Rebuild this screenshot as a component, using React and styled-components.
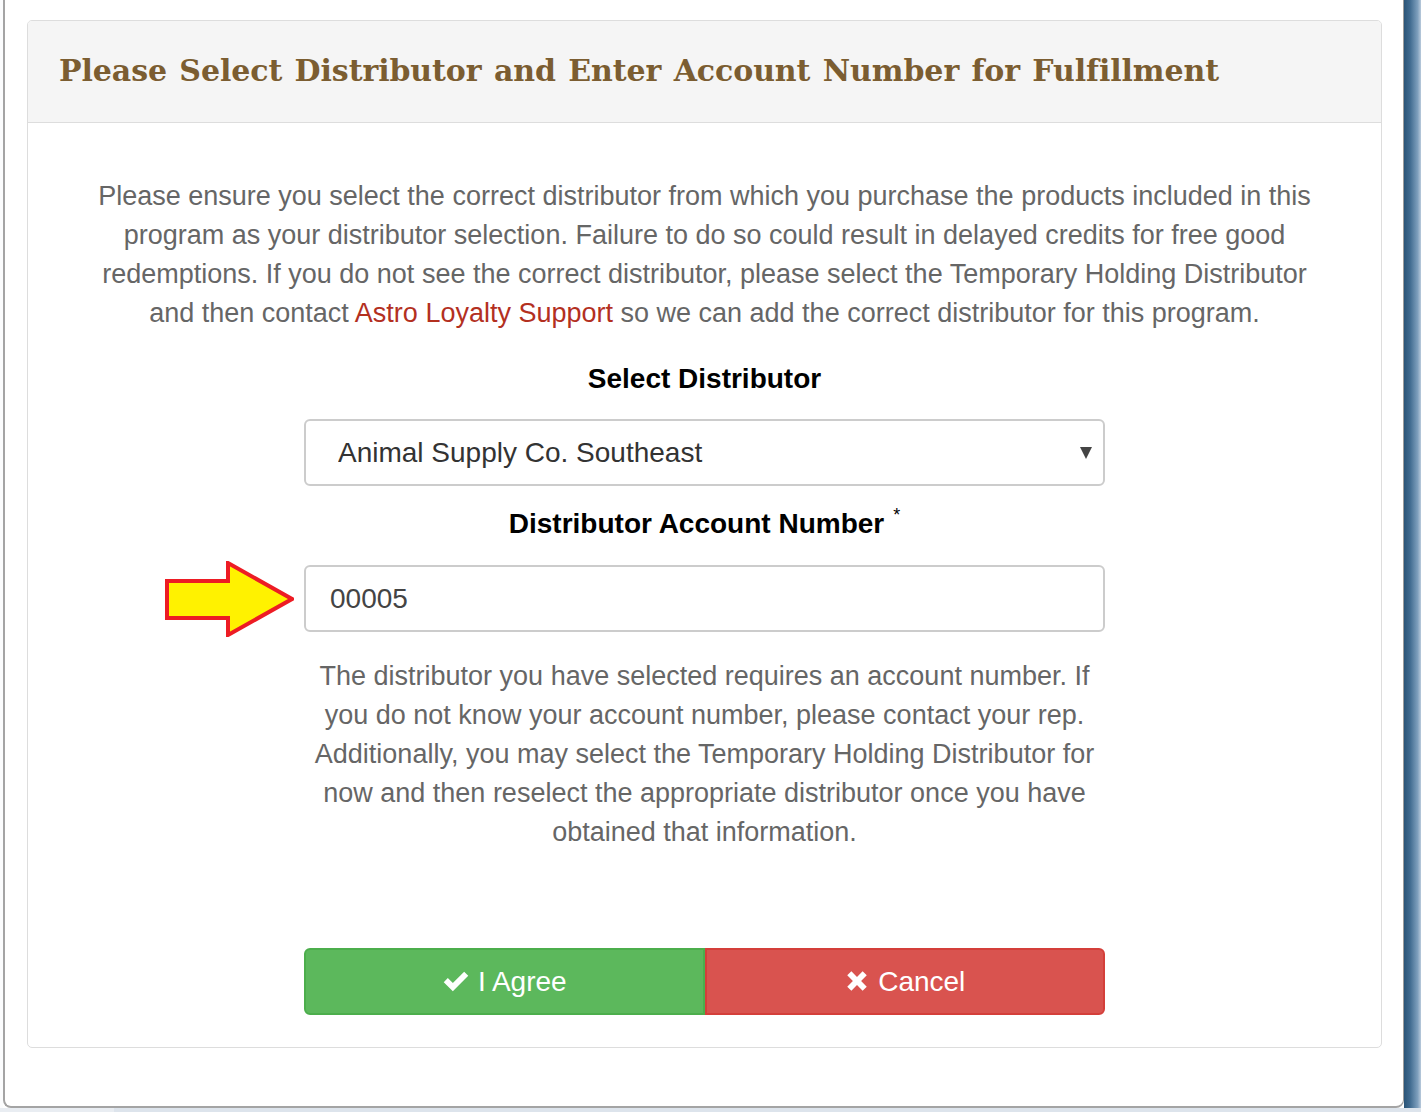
import React from "react"
import styled, { createGlobalStyle } from "styled-components"

const GlobalStyle = createGlobalStyle`
  html, body {
    margin: 0;
    padding: 0;
    background: #fff;
    overflow: hidden;
  }
  * {
    box-sizing: border-box;
  }
`

const CheckIcon = () => (
  <svg width="28" height="28" viewBox="0 0 24 24" aria-hidden="true">
    <polygon fill="#fff" points="1.5,13 5,9.5 9.3,13.8 19,4 22.5,7.5 9.3,20.7" />
  </svg>
)

const CrossIcon = () => (
  <svg width="26" height="26" viewBox="0 0 24 24" aria-hidden="true">
    <polygon
      fill="#fff"
      points="3,6.8 6.8,3 12,8.2 17.2,3 21,6.8 15.8,12 21,17.2 17.2,21 12,15.8 6.8,21 3,17.2 8.2,12"
    />
  </svg>
)

const PointerArrow = () => (
  <svg width="129" height="76" viewBox="0 0 129 76" aria-hidden="true">
    <polygon
      points="2,20 63,20 63,2 127,38 63,74 63,57 2,57"
      fill="#fff200"
      stroke="#ed1c24"
      strokeWidth="4"
      strokeLinejoin="miter"
    />
  </svg>
)

const App = () => (
  <>
    <GlobalStyle />
    <Page>
      <TopRow>
        <Gutter />
        <Frame>
          <Panel>
            <PanelHeader>
              <Title>Please Select Distributor and Enter Account Number for Fulfillment</Title>
            </PanelHeader>
            <PanelBody>
              <Lead>
                Please ensure you select the correct distributor from which you purchase the products
                included in this program as your distributor selection. Failure to do so could result in
                delayed credits for free good redemptions. If you do not see the correct distributor,
                please select the Temporary Holding Distributor and then contact{" "}
                <SupportLink href="#">Astro Loyalty Support</SupportLink> so we can add the correct
                distributor for this program.
              </Lead>

              <FieldLabel $top={31} $bottom={25}>Select Distributor</FieldLabel>
              <FieldRow>
                <Column>
                  <SelectWrap>
                    <Select defaultValue="asco">
                      <option value="asco">Animal Supply Co. Southeast</option>
                      <option value="temp">Temporary Holding Distributor</option>
                    </Select>
                  </SelectWrap>
                </Column>
              </FieldRow>

              <FieldLabel $top={23} $bottom={21}>
                Distributor Account Number<Required>*</Required>
              </FieldLabel>
              <FieldRow>
                <ArrowCell>
                  <PointerArrow />
                </ArrowCell>
                <Column>
                  <TextInput defaultValue="00005" />
                </Column>
              </FieldRow>

              <FieldRow>
                <Column>
                  <HelpText>
                    The distributor you have selected requires an account number. If you do not know
                    your account number, please contact your rep. Additionally, you may select the
                    Temporary Holding Distributor for now and then reselect the appropriate distributor
                    once you have obtained that information.
                  </HelpText>
                </Column>
              </FieldRow>

              <FieldRow>
                <Column>
                  <ButtonGroup>
                    <Button $variant="agree">
                      <CheckIcon /> I Agree
                    </Button>
                    <Button $variant="cancel">
                      <CrossIcon /> Cancel
                    </Button>
                  </ButtonGroup>
                </Column>
              </FieldRow>
            </PanelBody>
          </Panel>
        </Frame>
        <EdgeShadow />
      </TopRow>
      <BottomStrip />
    </Page>
  </>
)

const Page = styled.div`
  display: flex;
  flex-direction: column;
  width: 1421px;
  height: 1112px;
`

const TopRow = styled.div`
  display: flex;
  height: 1108px;
`

const Gutter = styled.div`
  width: 3px;
  background: #fbfcfd;
`

const Frame = styled.div`
  width: 1401px;
  padding: 20px 21px 0 22px;
  background: #fff;
  border-left: 2px solid #a4a4a4;
  border-right: 1px solid #9c9c9c;
  border-bottom: 2px solid #a4a4a4;
  border-bottom-left-radius: 8px;
  border-bottom-right-radius: 8px;
`

const EdgeShadow = styled.div`
  width: 17px;
  background: linear-gradient(to right, #2a5477 0%, #3f6a8f 35%, #7e9fbd 80%, #b9cadb 100%);
`

const BottomStrip = styled.div`
  height: 4px;
  background: linear-gradient(to right, #e9edf2 0%, #e9edf2 8%, #dde4ec 8%, #dde4ec 100%);
`

const Panel = styled.div`
  border: 1px solid #dddddd;
  border-radius: 5px;
  background: #fff;
  height: 1028px;
  overflow: hidden;
`

const PanelHeader = styled.div`
  height: 102px;
  display: flex;
  align-items: center;
  padding: 0 0 2px 31px;
  background: #f5f5f5;
  border-bottom: 1px solid #dddddd;
`

const Title = styled.h3`
  margin: 0;
  font-family: "DejaVu Serif", "Liberation Serif", serif;
  font-weight: bold;
  font-size: 30px;
  letter-spacing: -0.08px;
  word-spacing: 2px;
  color: #7b5d31;
`

const PanelBody = styled.div`
  padding: 54px 0 32px;
  display: flex;
  flex-direction: column;
  font-family: "Liberation Sans", Arial, sans-serif;
`

const Lead = styled.p`
  margin: 0 auto;
  max-width: 1236px;
  text-align: center;
  font-size: 27px;
  line-height: 39px;
  color: #666;
`

const SupportLink = styled.a`
  color: #b3301f;
  text-decoration: none;
`

const FieldLabel = styled.div`
  margin-top: ${(p) => p.$top}px;
  margin-bottom: ${(p) => p.$bottom}px;
  text-align: center;
  font-size: 28px;
  line-height: 30px;
  font-weight: bold;
  color: #000;
`

const Required = styled.span`
  display: inline-block;
  margin-left: 9px;
  font-size: 18px;
  line-height: 0;
  font-weight: normal;
  vertical-align: 12px;
`

const FieldRow = styled.div`
  display: grid;
  grid-template-columns: 1fr 801px 1fr;
  align-items: center;
`

const Column = styled.div`
  grid-column: 2;
`

const ArrowCell = styled.div`
  grid-column: 1;
  display: flex;
  justify-content: flex-end;
  padding-right: 10px;
  margin-top: 1px;
`

const SelectWrap = styled.div`
  position: relative;
  &::after {
    content: "";
    position: absolute;
    right: 13px;
    top: 28px;
    border-left: 6px solid transparent;
    border-right: 6px solid transparent;
    border-top: 12px solid #444;
    pointer-events: none;
  }
`

const Select = styled.select`
  appearance: none;
  -webkit-appearance: none;
  width: 100%;
  height: 67px;
  padding: 0 40px 0 32px;
  font-family: "Liberation Sans", Arial, sans-serif;
  font-size: 28px;
  color: #333;
  background: #fff;
  border: 2px solid #cccccc;
  border-radius: 6px;
  outline: none;
`

const TextInput = styled.input`
  display: block;
  width: 100%;
  height: 67px;
  padding: 0 24px;
  font-family: "Liberation Sans", Arial, sans-serif;
  font-size: 28px;
  color: #444;
  background: #fff;
  border: 2px solid #cccccc;
  border-radius: 6px;
  outline: none;
`

const HelpText = styled.p`
  margin: 20px 0 0;
  text-align: center;
  font-size: 27px;
  line-height: 39px;
  color: #666;
`

const ButtonGroup = styled.div`
  display: grid;
  grid-template-columns: 1fr 1fr;
  margin-top: 96px;
`

const Button = styled.button`
  display: flex;
  align-items: center;
  justify-content: center;
  gap: 8px;
  height: 67px;
  font-family: "Liberation Sans", Arial, sans-serif;
  font-size: 28px;
  color: #fff;
  cursor: pointer;
  border: 2px solid ${(p) => (p.$variant === "agree" ? "#4cae4c" : "#d43f3a")};
  background: ${(p) => (p.$variant === "agree" ? "#5cb85c" : "#d9534f")};
  border-radius: ${(p) => (p.$variant === "agree" ? "6px 0 0 6px" : "0 6px 6px 0")};
  svg {
    margin-top: -2px;
  }
`

export default App
